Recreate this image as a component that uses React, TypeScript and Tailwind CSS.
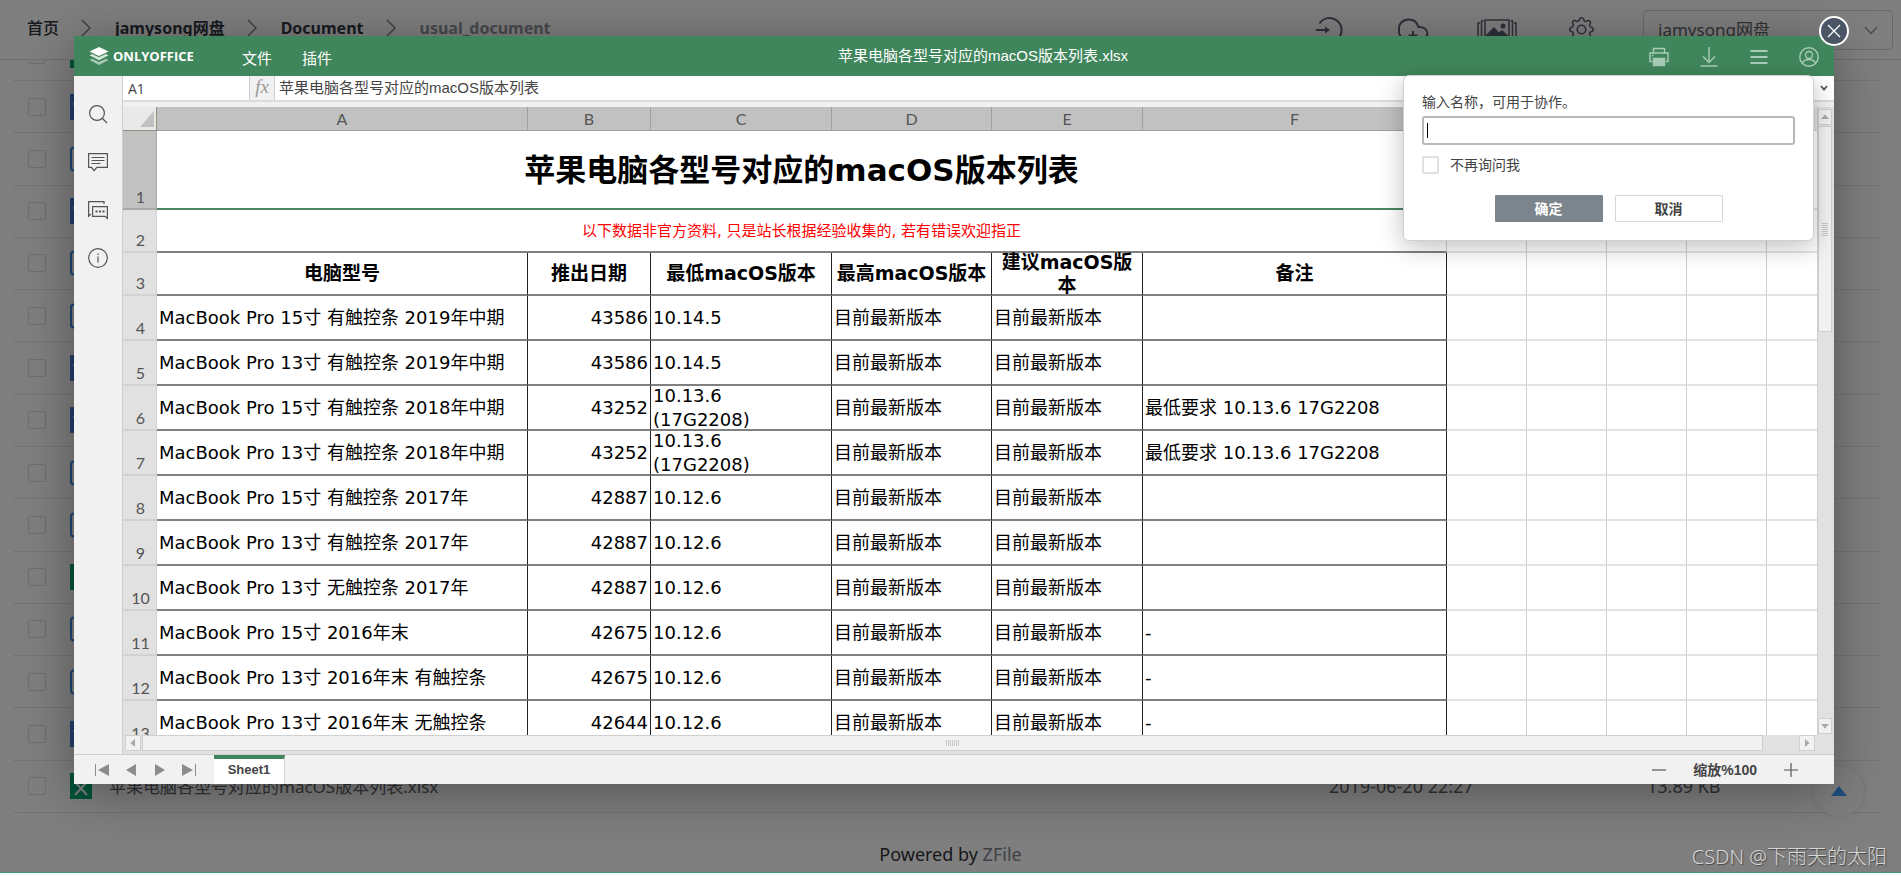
import type { ReactNode } from "react";
import { BsGear } from "react-icons/bs";

type FileKind = "sheet" | "doc" | "outline";

const files: FileKind[] = [
  "doc", "outline", "doc", "outline", "outline", "doc", "doc",
  "outline", "outline", "sheet", "outline", "outline", "doc", "sheet",
];

const NEW = "目前最新版本";
const rows: string[][] = [
  ["MacBook Pro 15寸 有触控条 2019年中期", "43586", "10.14.5", NEW, NEW, ""],
  ["MacBook Pro 13寸 有触控条 2019年中期", "43586", "10.14.5", NEW, NEW, ""],
  ["MacBook Pro 15寸 有触控条 2018年中期", "43252", "10.13.6 (17G2208)", NEW, NEW, "最低要求 10.13.6 17G2208"],
  ["MacBook Pro 13寸 有触控条 2018年中期", "43252", "10.13.6 (17G2208)", NEW, NEW, "最低要求 10.13.6 17G2208"],
  ["MacBook Pro 15寸 有触控条 2017年", "42887", "10.12.6", NEW, NEW, ""],
  ["MacBook Pro 13寸 有触控条 2017年", "42887", "10.12.6", NEW, NEW, ""],
  ["MacBook Pro 13寸 无触控条 2017年", "42887", "10.12.6", NEW, NEW, ""],
  ["MacBook Pro 15寸 2016年末", "42675", "10.12.6", NEW, NEW, "-"],
  ["MacBook Pro 13寸 2016年末 有触控条", "42675", "10.12.6", NEW, NEW, "-"],
  ["MacBook Pro 13寸 2016年末 无触控条", "42644", "10.12.6", NEW, NEW, "-"],
];

const uiFont = "font-['Noto_Sans','Noto_Sans_CJK_SC',sans-serif]";
const editorFont = "font-['Liberation_Sans','Noto_Sans_CJK_SC',sans-serif]";
const cellFont = "font-['DejaVu_Sans','Noto_Sans_CJK_SC',sans-serif]";

function FileIcon({ kind }: { kind: FileKind }) {
  if (kind === "outline") {
    return (
      <svg width="22" height="26" viewBox="0 0 22 26" fill="none" stroke="#3b8ae6" strokeWidth="2">
        <rect x="1" y="1.5" width="20" height="23" rx="3" />
        <path d="M6 9h10M6 14h10M6 19h6" />
      </svg>
    );
  }
  return (
    <svg width="22" height="26" viewBox="0 0 22 26">
      <rect width="22" height="26" fill={kind === "sheet" ? "#00a877" : "#4a7ddc"} />
      <path d={kind === "sheet" ? "M5 9l12 13M17 9L5 22" : "M4 9l4 12 3-10 3 10 4-12"} stroke="#fff" strokeWidth="2" fill="none" />
    </svg>
  );
}

function FileRow({ kind, name, date, size }: { kind: FileKind; name?: string; date?: string; size?: string }) {
  return (
    <li className="flex shrink-0 items-center border-b border-[#e6e8ee] text-[18px] text-[#606266]">
      <div className="flex min-w-0 flex-1 items-center">
        <input
          type="checkbox"
          aria-label={name ?? "选择文件"}
          className="ml-[15px] h-[18px] w-[18px] appearance-none rounded-[2px] border border-[#dcdfe6] bg-white"
        />
        <span className="ml-6 w-[39px]"><FileIcon kind={kind} /></span>
        <span className="truncate text-[17px]">{name}</span>
      </div>
      <span className="w-[318px]">{date}</span>
      <span className="w-[234px]">{size}</span>
    </li>
  );
}

function Crumb() {
  return (
    <svg width="10" height="18" viewBox="0 0 10 18" fill="none" stroke="#7b8088" strokeWidth="1.5" className="mr-6 ml-[22px]">
      <path d="M1 1l8 8-8 8" />
    </svg>
  );
}

function HeaderButton({ label, children }: { label: string; children: ReactNode }) {
  return (
    <button type="button" aria-label={label} className="flex h-10 w-12 items-center justify-center">
      {children}
    </button>
  );
}

function FilePage() {
  return (
    <div className="flex h-full flex-col bg-white">
      <header className="flex h-[60px] shrink-0 items-center border-b border-[#dcdfe6] pr-2 pl-[27px] text-[#303640]">
        <nav aria-label="路径" className="flex flex-1 items-center pb-[3px] text-[16px] font-bold">
          <a href="#home" className="font-medium">首页</a>
          <Crumb />
          <a href="#root">jamysong网盘</a>
          <Crumb />
          <a href="#document">Document</a>
          <Crumb />
          <span className="text-[#8f939a]">usual_document</span>
        </nav>
        <div className="mr-[38px] flex items-center gap-9 text-[#5a6270]">
          <HeaderButton label="登录">
            <svg width="28" height="28" viewBox="0 0 28 28" fill="none" stroke="currentColor" strokeWidth="2">
              <path d="M4.5 7.5A12 12 0 1 1 4.5 20.5" />
              <path d="M1 14h12" />
              <path d="M10 10.5l5 3.5-5 3.5z" fill="currentColor" stroke="none" />
            </svg>
          </HeaderButton>
          <HeaderButton label="上传">
            <svg width="32" height="28" viewBox="0 0 32 28" fill="none" stroke="currentColor" strokeWidth="2">
              <path d="M8 22.500A7 7 0 0 1 2 14C1.500 7.500 6 3.500 12 3.500c4.500 0 8 2.500 9.500 7.500 5-.5 8.500 2.500 9 6.500-.5 3-3 5-6 5" />
              <path d="M16 15v10M11.5 19.500h9" />
            </svg>
          </HeaderButton>
          <HeaderButton label="图库">
            <svg width="40" height="22" viewBox="0 0 40 22" fill="none" stroke="currentColor" strokeWidth="1.5">
              <rect x="8" y="1" width="24" height="20" />
              <path d="M6.500 2H4.500v18h2M33.500 2h2v18h-2M3 4H1v14h2M37 4h2v14h-2" />
              <circle cx="26" cy="7" r="2.5" fill="currentColor" stroke="none" />
              <path d="M9 16l8-8 5 5.500 3-2.500 6 5.500v4H9z" fill="currentColor" stroke="none" />
            </svg>
          </HeaderButton>
          <HeaderButton label="设置"><BsGear size={25} /></HeaderButton>
        </div>
        <div className="relative w-[250px]">
          <select
            aria-label="存储源"
            className="h-10 w-full appearance-none rounded-[4px] border border-[#d0d3da] bg-white pl-[14px] text-[17px] text-[#606266]"
          >
            <option>jamysong网盘</option>
          </select>
          <svg width="14" height="9" viewBox="0 0 14 9" fill="none" stroke="#9a9da3" strokeWidth="1.5" className="pointer-events-none absolute top-4 right-[15px]">
            <path d="M1 1l6 6.5L13 1" />
          </svg>
        </div>
      </header>

      <div className="flex min-h-0 flex-1 flex-col pr-5 pl-[13px]">
        <ul className="flex h-[21px] shrink-0 flex-col justify-end overflow-hidden [&>li]:h-[52px]">
          <FileRow kind="sheet" />
        </ul>
        <ul className="grid min-h-0 flex-1 auto-rows-fr">
          {files.map((kind, i) =>
            i === files.length - 1 ? (
              <FileRow key={i} kind={kind} name="苹果电脑各型号对应的macOS版本列表.xlsx" date="2019-06-20 22:27" size="13.89 KB" />
            ) : (
              <FileRow key={i} kind={kind} />
            ),
          )}
        </ul>
      </div>

      <footer className="flex h-[59px] shrink-0 items-end justify-center pb-[6px] text-[18px] leading-6 text-[#303133]">
        <p>Powered by <a href="#zfile" className="text-[#7a808c]">ZFile</a></p>
      </footer>
    </div>
  );
}

function Logo() {
  return (
    <svg width="20" height="19" viewBox="0 0 20 19" fill="#fff">
      <path d="M10 0l9.5 4.5L10 9 .5 4.5z" />
      <path opacity=".8" d="M.5 8.2l2.600-1.200L10 10.300 16.900 7l2.600 1.200-9.500 5z" />
      <path opacity=".55" d="M.5 13l2.600-1.200L10 15.100l6.900-3.300 2.600 1.200-9.500 5z" />
    </svg>
  );
}

function ToolButton({ label, children }: { label: string; children: ReactNode }) {
  return (
    <button type="button" aria-label={label} className="flex h-10 w-[50px] items-center justify-center pt-px">
      <svg width="20" height="20" viewBox="0 0 20 20" fill="none" stroke="#a9cdb8" strokeWidth="1.4">{children}</svg>
    </button>
  );
}

function RailButton({ label, children }: { label: string; children: ReactNode }) {
  return (
    <button type="button" aria-label={label} className="flex h-12 w-full items-center justify-center">
      <svg width="20" height="20" viewBox="0 0 20 20" fill="none" stroke="#555" strokeWidth="1.2">{children}</svg>
    </button>
  );
}

function Rail() {
  return (
    <aside className="w-[49px] shrink-0 border-r border-[#cfcfcf] bg-[#f1f1f1] pt-[14px]">
      <RailButton label="查找">
        <circle cx="9" cy="9" r="7.4" />
        <path d="M14 14l5 5" />
      </RailButton>
      <RailButton label="批注">
        <path d="M.6 1.600h18.800v13.800H9L6 18.500 3.500 15.400H.6z" />
        <path d="M3.500 5.500h13M3.500 8.500h13M3.500 11.500h9" />
      </RailButton>
      <RailButton label="聊天">
        <path d="M16 4V1.600H.6v14.600L3 14" />
        <path d="M4.600 6.600h14.800v11.800L17 16.400H4.600z" />
        <path d="M7.500 11.500h2M11 11.500h2M14.500 11.500h2" strokeWidth="2" />
      </RailButton>
      <RailButton label="关于">
        <circle cx="10" cy="10" r="9.3" />
        <path d="M10 8.500v6M10 5.500v1.500" />
      </RailButton>
    </aside>
  );
}

function RowHead({ n, selected }: { n: number; selected?: boolean }) {
  return (
    <th
      scope="row"
      className={`${selected ? "border-[#a8a8a8] bg-[#c1c1c1]" : "border-[#d2d2d2] bg-[#e1e1e1]"} border-r border-b-2 p-0 pl-[2px] text-center align-bottom font-['Lato',sans-serif] text-[16px] leading-[22px] font-normal text-[#555]`}
    >
      {n}
    </th>
  );
}

function EmptyCells() {
  return (
    <>
      {[0, 1, 2, 3, 4].map((i) => (
        <td key={i} className="border-r border-b-2 border-r-[#cfcfcf] border-b-[#e3e3e3]" />
      ))}
    </>
  );
}

const letters = ["A", "B", "C", "D", "E", "F"];
const headings = ["电脑型号", "推出日期", "最低macOS版本", "最高macOS版本", "建议macOS版本", "备注"];

function Sheet() {
  return (
    <div className="min-w-0 flex-1 overflow-hidden bg-white">
      <table className={`w-[1724px] table-fixed border-separate border-spacing-0 text-[18px] leading-6 text-black ${cellFont}`}>
        <colgroup>
          <col className="w-[34px]" />
          <col className="w-[371px]" />
          <col className="w-[123px]" />
          <col className="w-[181px]" />
          <col className="w-[160px]" />
          <col className="w-[151px]" />
          <col className="w-[304px]" />
          <col className="w-[80px]" />
          <col className="w-[80px]" />
          <col className="w-[80px]" />
          <col className="w-[80px]" />
          <col className="w-[80px]" />
        </colgroup>
        <thead>
          <tr className="h-6 font-['Lato',sans-serif] text-[16px] leading-5 text-[#555]">
            <td className="border-r border-b border-[#8f927e] bg-[#e9e9e9] p-0">
              <svg width="14" height="16" viewBox="0 0 14 16" className="mr-[2px] ml-auto"><path d="M14 0v16H0z" fill="#c1c1c1" /></svg>
            </td>
            {letters.map((c) => (
              <th key={c} scope="col" className="border-r border-b border-[#a0a0a0] bg-[#c1c1c1] p-0 pt-px font-normal">{c}</th>
            ))}
            {["G", "H", "I", "J", "K"].map((c) => (
              <th key={c} scope="col" className="border-r border-b border-[#d0d0d0] bg-[#e1e1e1] p-0 font-normal">{c}</th>
            ))}
          </tr>
        </thead>
        <tbody>
          <tr className="h-[79px]">
            <RowHead n={1} selected />
            <td colSpan={6} className="border-r border-b-2 border-r-[#cfcfcf] border-b-[#4a8560] p-0 text-center text-[31px] leading-10 font-bold">
              苹果电脑各型号对应的macOS版本列表
            </td>
            <EmptyCells />
          </tr>
          <tr className="h-[43px]">
            <RowHead n={2} />
            <td colSpan={6} className="border-r border-b-2 border-r-[#cfcfcf] border-b-[#808080] p-0 text-center text-[15px] text-[#ff0000]">
              以下数据非官方资料, 只是站长根据经验收集的, 若有错误欢迎指正
            </td>
            <EmptyCells />
          </tr>
          <tr className="h-[43px]">
            <RowHead n={3} />
            {headings.map((h) => (
              <th key={h} scope="col" className="border-r border-b-2 border-r-[#222] border-b-[#808080] p-0 text-[19px] font-bold">
                <div className="flex h-[41px] items-center justify-center px-1 leading-[23px]">{h}</div>
              </th>
            ))}
            <EmptyCells />
          </tr>
          {rows.map((row, r) => (
            <tr key={r} className="h-[45px]">
              <RowHead n={r + 4} />
              {row.map((v, c) => (
                <td key={c} className="border-r border-b-2 border-r-[#222] border-b-[#808080] p-0">
                  <div className={`flex h-[43px] items-center pt-px ${c === 1 ? "justify-end pr-[2px]" : c === 2 ? "pr-12 pl-[2px]" : "pl-[2px]"}`}>{v}</div>
                </td>
              ))}
              <EmptyCells />
            </tr>
          ))}
        </tbody>
      </table>
    </div>
  );
}

function Arrow({ d }: { d: string }) {
  return <svg width="8" height="8" viewBox="0 0 8 8" fill="#a8a8a8"><path d={d} /></svg>;
}

function VScroll() {
  return (
    <div className="flex w-[17px] shrink-0 flex-col items-start border-l border-[#cfcfcf] bg-[#e1e1e1] pt-[2px]">
      <button type="button" aria-label="向上滚动" className="flex h-4 w-[14px] items-center justify-center border border-[#cfcfcf] bg-[#f1f1f1]">
        <Arrow d="M0 6l4-4.500L8 6z" />
      </button>
      <div className="mt-px flex h-[206px] w-[14px] items-center justify-center border border-[#cfcfcf] bg-[#f1f1f1]">
        <div className="flex flex-col gap-px">
          {[0, 1, 2, 3, 4, 5, 6].map((i) => <span key={i} className="h-px w-[6px] bg-[#c8c8c8]" />)}
        </div>
      </div>
      <div className="flex-1" />
      <button type="button" aria-label="向下滚动" className="mb-px flex h-4 w-[14px] items-center justify-center border border-[#cfcfcf] bg-[#f1f1f1]">
        <Arrow d="M0 2l4 4.500L8 2z" />
      </button>
    </div>
  );
}

function HScroll() {
  return (
    <div className="flex h-[19px] shrink-0 items-start bg-[#e1e1e1] pr-[19px] pl-[2px]">
      <button type="button" aria-label="向左滚动" className="flex h-4 w-4 items-center justify-center border border-[#cfcfcf] bg-[#f1f1f1]">
        <Arrow d="M6 0L1.500 4 6 8z" />
      </button>
      <div className="mr-9 ml-px flex h-4 flex-1 items-center justify-center border border-[#cfcfcf] bg-[#f1f1f1]">
        <div className="flex gap-px">
          {[0, 1, 2, 3, 4, 5, 6].map((i) => <span key={i} className="h-[6px] w-px bg-[#c8c8c8]" />)}
        </div>
      </div>
      <button type="button" aria-label="向右滚动" className="flex h-4 w-4 items-center justify-center border border-[#cfcfcf] bg-[#f1f1f1]">
        <Arrow d="M2 0l4.500 4L2 8z" />
      </button>
    </div>
  );
}

function NavButton({ label, d, bar }: { label: string; d: string; bar?: string }) {
  return (
    <button type="button" aria-label={label} className="flex h-7 w-[29px] items-center justify-center">
      <svg width="14" height="12" viewBox="0 0 14 12" fill="#8c8c8c">
        <path d={d} />
        {bar && <path d={bar} stroke="#8c8c8c" />}
      </svg>
    </button>
  );
}

function StatusBar() {
  return (
    <div className="flex h-[30px] shrink-0 items-center border-t border-[#cfcfcf] bg-[#f1f1f1] text-[#444]">
      <div className="flex w-[140px] items-center pt-px pl-[13px]">
        <NavButton label="第一张" d="M14 0v12L3 6z" bar="M.5 0v12" />
        <NavButton label="上一张" d="M12 0v12L2 6z" />
        <NavButton label="下一张" d="M2 0v12l10-6z" />
        <NavButton label="最后一张" d="M0 0v12l11-6z" bar="M13.500 0v12" />
      </div>
      <button type="button" className="h-full w-[71px] border-t-4 border-r border-t-[#40865c] border-r-[#cfcfcf] bg-white pb-[3px] text-[13px] leading-5 font-bold">
        Sheet1
      </button>
      <div className="flex-1" />
      <div className="flex items-center pt-px pr-9 text-[14px] font-bold">
        <button type="button" aria-label="缩小">
          <svg width="14" height="14" viewBox="0 0 14 14" stroke="#555" strokeWidth="1.2"><path d="M0 7h14" /></svg>
        </button>
        <span className="mx-[27px]">缩放%100</span>
        <button type="button" aria-label="放大">
          <svg width="14" height="14" viewBox="0 0 14 14" stroke="#555" strokeWidth="1.2"><path d="M0 7h14M7 0v14" /></svg>
        </button>
      </div>
    </div>
  );
}

function NameDialog() {
  return (
    <form
      role="dialog"
      aria-label="输入名称"
      className="absolute top-[39px] right-5 w-[411px] rounded-[6px] border border-[#cfcfcf] bg-white px-[18px] pt-4 pb-[18px] text-[14px] leading-5 text-[#444] shadow-[0_6px_24px_rgba(0,0,0,0.25)]"
    >
      <label htmlFor="guest" className="block">输入名称，可用于协作。</label>
      <div className="relative mt-1 flex">
        <input id="guest" type="text" className="h-[29px] w-full rounded-[3px] border-2 border-[#b8b8b8] bg-white px-1 caret-transparent outline-none" />
        <span className="absolute top-[7px] left-[5px] h-[15px] w-px bg-black" />
      </div>
      <label className="mt-[11px] flex h-[18px] items-center">
        <input type="checkbox" className="mr-[11px] h-[18px] w-[17px] appearance-none rounded-[2px] border-2 border-[#e0e0e0] bg-white" />
        不再询问我
      </label>
      <div className="mt-[21px] flex justify-center gap-3 font-bold">
        <button type="button" className="h-[27px] w-[108px] rounded-[1px] bg-[#7d858c] text-white">确定</button>
        <button type="button" className="h-[27px] w-[108px] rounded-[1px] border border-[#d5d5d5] bg-white">取消</button>
      </div>
    </form>
  );
}

function Editor() {
  return (
    <section className={`relative flex min-w-0 flex-1 flex-col bg-[#f1f1f1] shadow-[0_8px_50px_rgba(0,0,0,0.35)] ${editorFont}`}>
      <header className="flex h-10 shrink-0 items-center bg-[#40865c] text-[15px] text-white">
        <a href="#office" className="ml-[15px] flex w-[153px] items-center gap-1 pt-px font-['Open_Sans',sans-serif] text-[13px] font-bold">
          <Logo />
          ONLYOFFICE
        </a>
        <nav className="flex gap-[30px] pt-[6px]">
          <a href="#file">文件</a>
          <a href="#plugins">插件</a>
        </nav>
        <h1 className="flex-1 pt-px text-center">苹果电脑各型号对应的macOS版本列表.xlsx</h1>
        <ToolButton label="打印">
          <path d="M4.500 5.500V1.500h11v4M3.500 14.500H1V6h18v8.500h-2.500" />
          <path d="M4.500 11.500h11v7h-11z" fill="#a9cdb8" />
          <path d="M3 8.500h1.500" />
        </ToolButton>
        <ToolButton label="下载"><path d="M10 0v15M4 9.500l6 6 6-6M1.500 19h17" /></ToolButton>
        <ToolButton label="菜单"><path d="M1.500 4h17M1.500 10h17M1.500 16h17" strokeWidth="2" /></ToolButton>
        <ToolButton label="用户">
          <circle cx="10" cy="10" r="9.2" />
          <circle cx="10" cy="8" r="3.5" />
          <path d="M3.500 16.200c1-2.500 3.500-3.700 6.500-3.700s5.500 1.200 6.500 3.700" />
        </ToolButton>
      </header>

      <div className="flex min-h-0 flex-1">
        <Rail />
        <div className="flex min-w-0 flex-1 flex-col">
          <div className="mb-[5px] flex h-[26px] shrink-0 border-b-2 border-[#dcdcdc] text-[15px] text-[#444]">
            <input aria-label="名称框" defaultValue="A1" className="w-[127px] border-r border-[#cfcfcf] bg-white px-[5px] font-['Open_Sans',sans-serif] text-[14px]" />
            <span className="w-[25px] border-r border-[#cfcfcf] text-center font-['Liberation_Serif',serif] text-[19px] leading-[22px] text-[#999] italic">fx</span>
            <input aria-label="编辑栏" defaultValue="苹果电脑各型号对应的macOS版本列表" className="min-w-0 flex-1 bg-white px-1" />
            <button type="button" aria-label="展开" className="flex w-[21px] items-center justify-center bg-white">
              <svg width="8" height="6" viewBox="0 0 8 6" fill="none" stroke="#555" strokeWidth="1.8"><path d="M1 1l3 3.500L7 1" /></svg>
            </button>
          </div>
          <div className="flex min-h-0 flex-1">
            <Sheet />
            <VScroll />
          </div>
          <HScroll />
        </div>
      </div>
      <StatusBar />
      <NameDialog />
      <button
        type="button"
        aria-label="关闭"
        className="absolute -top-5 -right-[15px] flex h-[30px] w-[30px] items-center justify-center rounded-full border-2 border-white bg-[#4a5565]"
      >
        <svg width="14" height="14" viewBox="0 0 14 14" stroke="#fff" strokeWidth="1.3"><path d="M1 1l12 12M13 1L1 13" /></svg>
      </button>
    </section>
  );
}

export default function App() {
  return (
    <div className={`flex h-screen flex-col overflow-hidden bg-white ${uiFont}`}>
      <main className="relative min-h-0 flex-1">
        <FilePage />
        <button
          type="button"
          aria-label="回到顶部"
          className="absolute right-[37px] bottom-14 flex h-[50px] w-[50px] items-center justify-center rounded-full bg-white shadow-[0_0_6px_rgba(0,0,0,0.12)]"
        >
          <svg width="16" height="10" viewBox="0 0 16 10" fill="#409eff"><path d="M8 0l8 10H0z" /></svg>
        </button>
        <div className="absolute inset-0 flex bg-black/50 pt-9 pr-[67px] pb-[88px] pl-[74px]">
          <Editor />
        </div>
        <p className="absolute right-[14px] bottom-0 text-[20px] leading-[30px] font-light text-[#d6d6d6] [text-shadow:1px_1px_1px_#444]">
          CSDN @下雨天的太阳
        </p>
      </main>
      <div className="h-px bg-[#3f9a7c]" />
      <div className="h-[3px]" />
    </div>
  );
}
